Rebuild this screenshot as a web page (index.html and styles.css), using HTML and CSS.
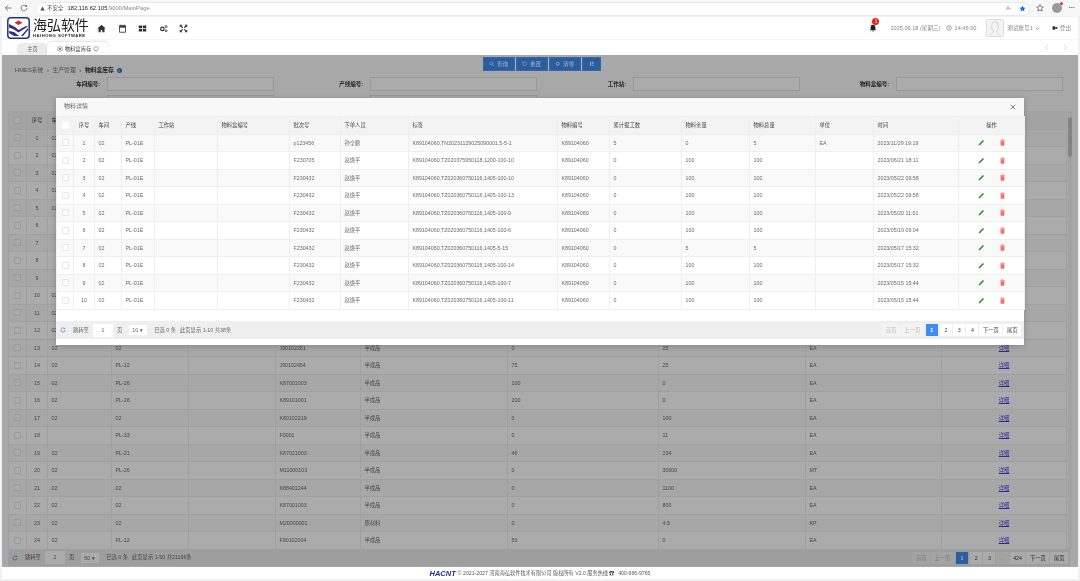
FILE: index.html
```html
<!DOCTYPE html>
<html lang="zh-CN">
<head>
<meta charset="utf-8">
<title>物料盒库存</title>
<link rel="stylesheet" href="styles.css">
</head>
<body>
<svg class="sprite" aria-hidden="true">
  <defs>
    <symbol id="pencil" viewBox="0 0 12 12"><path d="M1 11l.6-2.6L8.4 1.6l2 2-6.8 6.8z" fill="#2e8b2e"/></symbol>
    <symbol id="trash" viewBox="0 0 12 12"><path d="M4.5 1h3l.5 1h2.5v1.2h-9V2H4zM2.5 4h7l-.5 7.5H3z" fill="#f56c6c"/></symbol>
    <symbol id="refresh" viewBox="0 0 12 12"><path d="M10 6a4 4 0 1 1-1.3-3" fill="none" stroke="#3f87d8" stroke-width="1.4"/><path d="M10.4 1v3.2H7.2z" fill="#3f87d8"/></symbol>
  </defs>
</svg>

<div class="chrome">
  <svg class="chrome-ico" viewBox="0 0 12 12"><path d="M11 6H2M6 2L2 6l4 4" fill="none" stroke="#444" stroke-width="1"/></svg>
  <svg class="chrome-ico" viewBox="0 0 12 12"><path d="M10.2 6a4.2 4.2 0 1 1-1.3-3" fill="none" stroke="#444" stroke-width="1"/><path d="M10.4 1v3H7.4z" fill="#444"/></svg>
  <div class="address">
    <svg class="warn" viewBox="0 0 10 10"><path d="M5 1l4.5 8h-9z" fill="#555"/></svg>
    <span class="insecure">不安全</span>
    <span class="url">182.116.62.105<span class="url-dim">:9000/MainPage</span></span>
    <span class="addr-fill"></span>
    <span class="read">A<small>ᐞ</small></span>
    <svg class="addr-star" viewBox="0 0 12 12"><path d="M6 .8l1.6 3.4 3.7.5-2.7 2.6.7 3.7L6 9.2l-3.3 1.8.7-3.7L.7 4.7l3.7-.5z" fill="#1a6fd4"/></svg>
  </div>
  <svg class="fav" viewBox="0 0 12 12"><path d="M6 1l1.5 3.2 3.5.5-2.5 2.4.6 3.4L6 8.9l-3.1 1.6.6-3.4L1 4.7l3.5-.5z" fill="none" stroke="#444" stroke-width="1"/></svg>
  <span class="profile"><i></i></span>
  <span class="more">···</span>
</div>

<div class="app">
  <header class="topbar">
    <div class="brand">
      <svg class="logo" viewBox="0 0 23 22">
        <rect x=".8" y=".8" width="21.4" height="20.4" rx="3" fill="#fff" stroke="#2b2f86" stroke-width="1.5"/>
        <path d="M11.5 3.5l4 2.3-4 2.2-4-2.2z" fill="#e3242b"/>
        <path d="M2 7l6 3 3.5 3L19 9l2 .5-9.5 6L6 12l-4-1.5z" fill="#2b2f86"/>
        <path d="M2 14l5 1 5 4h-5L2 16zM21 13l-5 6h-2l7-8z" fill="#2b2f86"/>
      </svg>
      <div class="brand-text">
        <div class="brand-cn">海弘软件</div>
        <div class="brand-en">HAIHONG SOFTWARE</div>
      </div>
    </div>
    <nav class="topnav">
      <svg viewBox="0 0 12 12"><path d="M6 1L.5 6H2v5h3V8h2v3h3V6h1.500z" fill="#333"/></svg>
      <svg viewBox="0 0 12 12"><path d="M2 2h8v9H2z" fill="none" stroke="#444" stroke-width="1.200"/><path d="M2 2h8v3H2zM3.500 .8h1v2h-1zM7.500 .8h1v2h-1z" fill="#444"/></svg>
      <svg viewBox="0 0 12 12"><path d="M1 2h4.500v3.500H1zM6.500 2H11v3.500H6.500zM1 6.500h4.500V10H1zM6.500 6.500H11V10H6.500z" fill="#333"/></svg>
      <svg viewBox="0 0 12 12"><circle cx="4.500" cy="6.500" r="2.300" fill="none" stroke="#333" stroke-width="1.600"/><circle cx="9.500" cy="3.500" r="1.300" fill="none" stroke="#333" stroke-width="1.100"/><circle cx="9.500" cy="9" r="1.300" fill="none" stroke="#333" stroke-width="1.100"/></svg>
      <svg viewBox="0 0 12 12"><path d="M1 1h3.500L3.300 2.200 5.500 4.400 4.400 5.500 2.200 3.300 1 4.500zM11 1v3.500L9.800 3.300 7.600 5.500 6.500 4.400l2.200-2.200L7.500 1zM1 11V7.500l1.200 1.200 2.200-2.200 1.100 1.100-2.200 2.200L4.500 11zM11 11H7.500l1.200-1.200-2.200-2.200 1.100-1.100 2.200 2.200L11 7.500z" fill="#333"/></svg>
    </nav>
    <div class="status">
      <div class="bell">
        <svg viewBox="0 0 12 12"><path d="M6 1a3.500 3.500 0 0 1 3.500 3.500V8l1.200 1.500H1.300L2.500 8V4.500A3.500 3.500 0 0 1 6 1zM4.800 10.300h2.400A1.200 1.200 0 0 1 4.800 10.300z" fill="#222"/></svg>
        <span class="badge">1</span>
      </div>
      <span class="date">2025.06.18 (星期三)</span>
      <svg class="clock" viewBox="0 0 12 12"><circle cx="6" cy="6" r="4.700" fill="none" stroke="#666" stroke-width="1.100"/><path d="M6 3v3.300h2.500" fill="none" stroke="#666"/></svg>
      <span class="time">14:45:30</span>
      <div class="avatar"><svg viewBox="0 0 18 18"><path d="M4 17c1-2 3-2.500 3.200-4C5.500 11 5 8.500 5.200 6.500 5.500 3.500 7 2 9 2s3.500 1.500 3.800 4.500c.2 2-.3 4.500-2 6.500.2 1.500 2.200 2 3.200 4" fill="none" stroke="#ccc" stroke-width="1"/></svg></div>
      <span class="user">测试账号1</span>
      <svg class="caret" viewBox="0 0 8 8"><path d="M1 2.500l3 3 3-3" fill="none" stroke="#666"/></svg>
      <svg class="exit" viewBox="0 0 12 12"><path d="M1 2.500h5v7H1z" fill="#333"/><path d="M6 4.500h3V3l2.500 3L9 9V7.500H6z" fill="#333"/></svg>
      <span class="logout">登出</span>
    </div>
  </header>

  <div class="tabs">
    <div class="tab">主页</div>
    <div class="tab tab-active">
      <svg viewBox="0 0 10 10"><circle cx="5" cy="5" r="4" fill="none" stroke="#555" stroke-width=".8"/><circle cx="5" cy="5" r="1.600" fill="#555"/></svg>
      物料盒库存
      <svg viewBox="0 0 10 10"><circle cx="5" cy="4.500" r="3.500" fill="none" stroke="#555" stroke-width=".8"/><path d="M4 8l2 1" stroke="#555" stroke-width=".8"/></svg>
    </div>
    <div class="tab-arrows">
      <svg viewBox="0 0 8 10"><path d="M6 1L2 5l4 4" fill="none" stroke="#c9c9c9" stroke-width="1.200"/></svg>
      <svg viewBox="0 0 8 10"><path d="M2 1l4 4-4 4" fill="none" stroke="#c9c9c9" stroke-width="1.200"/></svg>
    </div>
  </div>

  <main class="content">
    <div class="toolbar">
      <div class="crumbs">HMES系统 <span class="sep">›</span> 生产管理 <span class="sep">›</span> <b>物料盒库存</b> <i class="info">i</i></div>
      <div class="actions">
        <button class="btn"><svg viewBox="0 0 10 10"><circle cx="4.300" cy="4.300" r="2.800" fill="none" stroke="#fff" stroke-width="1.100"/><path d="M6.500 6.500L9 9" stroke="#fff" stroke-width="1.200"/></svg>查询</button>
        <button class="btn"><svg viewBox="0 0 10 10"><path d="M2 3a3.500 3.500 0 1 1-.5 2.500" fill="none" stroke="#fff" stroke-width="1.100"/><path d="M1 1v3h3z" fill="#fff"/></svg>重置</button>
        <button class="btn"><svg viewBox="0 0 10 10"><circle cx="5" cy="5" r="2.800" fill="none" stroke="#fff" stroke-width="1.500"/></svg>清零</button>
        <button class="btn btn-icon"><svg viewBox="0 0 10 10"><path d="M2 1h2v8H2zM6 1h2v4.500H6zM6 7h2v2H6z" fill="#fff"/></svg></button>
      </div>
    </div>

    <form class="filters">
      <label class="field"><span>车间编号:</span><i class="input"></i></label>
      <label class="field"><span>产线编号:</span><i class="input"></i></label>
      <label class="field"><span>工作站:</span><i class="input"></i></label>
      <label class="field"><span>物料盒编号:</span><i class="input"></i></label>
      <label class="field"><span>类型:</span><i class="input"></i></label>
      <label class="field"><span>物料编号:</span><i class="input"></i></label>
    </form>

    <div class="grid-wrap">
      <div class="grid-scroll">
        <table class="table table-main">
          <colgroup><col class="m1"><col class="m2"><col class="m3"><col class="m4"><col class="m5"><col class="m6"><col class="m7"><col class="m8"><col class="m9"><col class="m10"><col class="m11"></colgroup>
          <thead><tr><th><i class="check"></i></th><th class="center">序号</th><th>车间</th><th>产线</th><th>工作站</th><th>物料编号</th><th>类型</th><th>数量</th><th>余量</th><th>单位</th><th class="center">操作</th></tr></thead>
          <tbody>
            <tr><td><i class="check"></i></td><td class="center">1</td><td>02</td><td>02</td><td></td><td>K80102219</td><td>半成品</td><td>0</td><td>100</td><td>EA</td><td class="center"><a>详细</a></td></tr>
            <tr><td><i class="check"></i></td><td class="center">2</td><td>02</td><td>02</td><td></td><td>K80102219</td><td>半成品</td><td>0</td><td>100</td><td>EA</td><td class="center"><a>详细</a></td></tr>
            <tr><td><i class="check"></i></td><td class="center">3</td><td>02</td><td>02</td><td></td><td>K80102219</td><td>半成品</td><td>0</td><td>100</td><td>EA</td><td class="center"><a>详细</a></td></tr>
            <tr><td><i class="check"></i></td><td class="center">4</td><td>02</td><td>02</td><td></td><td>K80102219</td><td>半成品</td><td>0</td><td>100</td><td>EA</td><td class="center"><a>详细</a></td></tr>
            <tr><td><i class="check"></i></td><td class="center">5</td><td>02</td><td>02</td><td></td><td>K80102219</td><td>半成品</td><td>0</td><td>100</td><td>EA</td><td class="center"><a>详细</a></td></tr>
            <tr><td><i class="check"></i></td><td class="center">6</td><td></td><td>02</td><td></td><td>K80102219</td><td>半成品</td><td>0</td><td>100</td><td>EA</td><td class="center"><a>详细</a></td></tr>
            <tr><td><i class="check"></i></td><td class="center">7</td><td></td><td>02</td><td></td><td>K80102219</td><td>半成品</td><td>0</td><td>100</td><td>EA</td><td class="center"><a>详细</a></td></tr>
            <tr><td><i class="check"></i></td><td class="center">8</td><td></td><td>02</td><td></td><td>K80102219</td><td>半成品</td><td>0</td><td>100</td><td>EA</td><td class="center"><a>详细</a></td></tr>
            <tr><td><i class="check"></i></td><td class="center">9</td><td></td><td>02</td><td></td><td>K80102219</td><td>半成品</td><td>0</td><td>100</td><td>EA</td><td class="center"><a>详细</a></td></tr>
            <tr><td><i class="check"></i></td><td class="center">10</td><td>02</td><td>02</td><td></td><td>K80102219</td><td>半成品</td><td>0</td><td>100</td><td>EA</td><td class="center"><a>详细</a></td></tr>
            <tr><td><i class="check"></i></td><td class="center">11</td><td>02</td><td>02</td><td></td><td>K80102219</td><td>半成品</td><td>0</td><td>100</td><td>EA</td><td class="center"><a>详细</a></td></tr>
            <tr><td><i class="check"></i></td><td class="center">12</td><td>02</td><td>02</td><td></td><td>K80102219</td><td>半成品</td><td>0</td><td>100</td><td>EA</td><td class="center"><a>详细</a></td></tr>
            <tr><td><i class="check"></i></td><td class="center">13</td><td>02</td><td>02</td><td></td><td>J90102261</td><td>半成品</td><td>0</td><td>25</td><td>EA</td><td class="center"><a>详细</a></td></tr>
            <tr><td><i class="check"></i></td><td class="center">14</td><td>02</td><td>PL-12</td><td></td><td>J90102454</td><td>半成品</td><td>75</td><td>25</td><td>EA</td><td class="center"><a>详细</a></td></tr>
            <tr><td><i class="check"></i></td><td class="center">15</td><td>02</td><td>PL-26</td><td></td><td>K87001003</td><td>半成品</td><td>100</td><td>0</td><td>EA</td><td class="center"><a>详细</a></td></tr>
            <tr><td><i class="check"></i></td><td class="center">16</td><td>02</td><td>PL-26</td><td></td><td>K89101001</td><td>半成品</td><td>200</td><td>0</td><td>EA</td><td class="center"><a>详细</a></td></tr>
            <tr><td><i class="check"></i></td><td class="center">17</td><td>02</td><td>02</td><td></td><td>K80102219</td><td>半成品</td><td>0</td><td>100</td><td>EA</td><td class="center"><a>详细</a></td></tr>
            <tr><td><i class="check"></i></td><td class="center">18</td><td></td><td>PL-33</td><td></td><td>F0001</td><td>半成品</td><td>0</td><td>11</td><td>EA</td><td class="center"><a>详细</a></td></tr>
            <tr><td><i class="check"></i></td><td class="center">19</td><td>02</td><td>PL-21</td><td></td><td>K87021003</td><td>半成品</td><td>46</td><td>234</td><td>EA</td><td class="center"><a>详细</a></td></tr>
            <tr><td><i class="check"></i></td><td class="center">20</td><td>02</td><td>PL-26</td><td></td><td>M11000103</td><td>半成品</td><td>0</td><td>30000</td><td>MT</td><td class="center"><a>详细</a></td></tr>
            <tr><td><i class="check"></i></td><td class="center">21</td><td>02</td><td>02</td><td></td><td>K88401244</td><td>半成品</td><td>0</td><td>1100</td><td>EA</td><td class="center"><a>详细</a></td></tr>
            <tr><td><i class="check"></i></td><td class="center">22</td><td>02</td><td>02</td><td></td><td>K87001003</td><td>半成品</td><td>0</td><td>800</td><td>EA</td><td class="center"><a>详细</a></td></tr>
            <tr><td><i class="check"></i></td><td class="center">23</td><td>02</td><td>02</td><td></td><td>M20000001</td><td>原材料</td><td>0</td><td>4.5</td><td>KP</td><td class="center"><a>详细</a></td></tr>
            <tr><td><i class="check"></i></td><td class="center">24</td><td>02</td><td>PL-12</td><td></td><td>F90102004</td><td>半成品</td><td>50</td><td>0</td><td>EA</td><td class="center"><a>详细</a></td></tr>
          </tbody>
        </table>
        <div class="scrollbar"><i></i></div>
      </div>
      <div class="pager pager-main">
        <svg class="pager-refresh"><use href="#refresh"/></svg>
        <span>跳转至</span><i class="page-input">1</i><span>页</span>
        <i class="page-size">50 <b>▾</b></i>
        <span>已选 0 条</span><span>此页显示 1-50 共21196条</span>
        <div class="pages">
          <a class="off">首页</a><a class="off">上一页</a><a class="on">1</a><a>2</a><a>3</a><a class="off">...</a><a>424</a><a>下一页</a><a>尾页</a>
        </div>
      </div>
    </div>

    <div class="overlay"></div>

    <section class="modal">
      <div class="modal-title"><span>物料详情</span><svg viewBox="0 0 8 8"><path d="M1 1l6 6M7 1L1 7" stroke="#444" stroke-width=".9"/></svg></div>
      <div class="modal-body">
        <table class="table table-detail">
          <colgroup><col class="d1"><col class="d2"><col class="d3"><col class="d4"><col class="d5"><col class="d6"><col class="d7"><col class="d8"><col class="d9"><col class="d10"><col class="d11"><col class="d12"><col class="d13"><col class="d14"><col class="d15"><col class="d16"></colgroup>
          <thead><tr><th><i class="check"></i></th><th class="center">序号</th><th>车间</th><th>产线</th><th>工作站</th><th>物料盒编号</th><th>批次号</th><th>下单人员</th><th>标签</th><th>物料编号</th><th>累计报工数</th><th>物料余量</th><th>物料总量</th><th>单位</th><th>时间</th><th class="center">操作</th></tr></thead>
          <tbody>
            <tr><td><i class="check"></i></td><td class="center">1</td><td>02</td><td>PL-01E</td><td></td><td></td><td>p123456</td><td>孙全鹏</td><td>K89104060,TN20231129025090001,5-5-1</td><td>K89104060</td><td>5</td><td>0</td><td>5</td><td>EA</td><td>2023/11/29 19:19</td><td class="ops"><svg><use href="#pencil"/></svg><svg><use href="#trash"/></svg></td></tr>
            <tr><td><i class="check"></i></td><td class="center">2</td><td>02</td><td>PL-01E</td><td></td><td></td><td>F230705</td><td>赵焕平</td><td>K89104060,TZ020375950118,1200-100-10</td><td>K89104060</td><td>0</td><td>100</td><td>100</td><td></td><td>2023/06/21 18:11</td><td class="ops"><svg><use href="#pencil"/></svg><svg><use href="#trash"/></svg></td></tr>
            <tr><td><i class="check"></i></td><td class="center">3</td><td>02</td><td>PL-01E</td><td></td><td></td><td>F230432</td><td>赵焕平</td><td>K89104060,TZ020360750116,1405-100-10</td><td>K89104060</td><td>0</td><td>100</td><td>100</td><td></td><td>2023/05/22 09:58</td><td class="ops"><svg><use href="#pencil"/></svg><svg><use href="#trash"/></svg></td></tr>
            <tr><td><i class="check"></i></td><td class="center">4</td><td>02</td><td>PL-01E</td><td></td><td></td><td>F230432</td><td>赵焕平</td><td>K89104060,TZ020360750116,1405-100-13</td><td>K89104060</td><td>0</td><td>100</td><td>100</td><td></td><td>2023/05/22 09:58</td><td class="ops"><svg><use href="#pencil"/></svg><svg><use href="#trash"/></svg></td></tr>
            <tr><td><i class="check"></i></td><td class="center">5</td><td>02</td><td>PL-01E</td><td></td><td></td><td>F230432</td><td>赵焕平</td><td>K89104060,TZ020360750116,1405-100-9</td><td>K89104060</td><td>0</td><td>100</td><td>100</td><td></td><td>2023/05/20 11:01</td><td class="ops"><svg><use href="#pencil"/></svg><svg><use href="#trash"/></svg></td></tr>
            <tr><td><i class="check"></i></td><td class="center">6</td><td>02</td><td>PL-01E</td><td></td><td></td><td>F230432</td><td>赵焕平</td><td>K89104060,TZ020360750116,1405-100-6</td><td>K89104060</td><td>0</td><td>100</td><td>100</td><td></td><td>2023/05/19 09:04</td><td class="ops"><svg><use href="#pencil"/></svg><svg><use href="#trash"/></svg></td></tr>
            <tr><td><i class="check"></i></td><td class="center">7</td><td>02</td><td>PL-01E</td><td></td><td></td><td>F230432</td><td>赵焕平</td><td>K89104060,TZ020360750116,1405-5-15</td><td>K89104060</td><td>0</td><td>5</td><td>5</td><td></td><td>2023/05/17 15:32</td><td class="ops"><svg><use href="#pencil"/></svg><svg><use href="#trash"/></svg></td></tr>
            <tr><td><i class="check"></i></td><td class="center">8</td><td>02</td><td>PL-01E</td><td></td><td></td><td>F230432</td><td>赵焕平</td><td>K89104060,TZ020360750116,1405-100-14</td><td>K89104060</td><td>0</td><td>100</td><td>100</td><td></td><td>2023/05/17 15:32</td><td class="ops"><svg><use href="#pencil"/></svg><svg><use href="#trash"/></svg></td></tr>
            <tr><td><i class="check"></i></td><td class="center">9</td><td>02</td><td>PL-01E</td><td></td><td></td><td>F230432</td><td>赵焕平</td><td>K89104060,TZ020360750116,1405-100-7</td><td>K89104060</td><td>0</td><td>100</td><td>100</td><td></td><td>2023/05/15 15:44</td><td class="ops"><svg><use href="#pencil"/></svg><svg><use href="#trash"/></svg></td></tr>
            <tr><td><i class="check"></i></td><td class="center">10</td><td>02</td><td>PL-01E</td><td></td><td></td><td>F230432</td><td>赵焕平</td><td>K89104060,TZ020360750116,1405-100-11</td><td>K89104060</td><td>0</td><td>100</td><td>100</td><td></td><td>2023/05/15 15:44</td><td class="ops"><svg><use href="#pencil"/></svg><svg><use href="#trash"/></svg></td></tr>
          </tbody>
        </table>
      </div>
      <div class="pager pager-detail">
        <svg class="pager-refresh"><use href="#refresh"/></svg>
        <span>跳转至</span><i class="page-input">1</i><span>页</span>
        <i class="page-size">10 <b>▾</b></i>
        <span>已选 0 条</span><span>此页显示 1-10 共38条</span>
        <div class="pages">
          <a class="off">首页</a><a class="off">上一页</a><a class="on">1</a><a>2</a><a>3</a><a>4</a><a>下一页</a><a>尾页</a>
        </div>
      </div>
    </section>
  </main>

  <footer class="footer"><b>HACNT</b><span>© 2021-2027 河南海弘软件技术有限公司 版权所有 V2.0 服务热线</span><i class="phone">☎</i><span>: 400-666-9765</span></footer>
</div>
</body>
</html>
```

FILE: styles.css
```css
* { box-sizing: border-box; }
html, body { margin: 0; height: 100%; }
html { background: #f1f1f1; }
body {
  width: 1080px; height: 581px; overflow: hidden;
  background: #f1f1f1; color: #555;
  font: 5.3px/1.2 "Liberation Sans", "Noto Sans CJK SC", sans-serif;
  display: flex; flex-direction: column;
  filter: blur(.3px);
}
i { font-style: normal; }
.sprite { width: 0; height: 0; position: absolute; }

/* browser chrome */
.chrome { height: 16px; flex: none; display: flex; align-items: center; padding: 0 5px 0 4px; background: #f7f7f7; }
.chrome-ico { width: 8px; height: 8px; margin-right: 8px; }
.address { width: 995px; height: 14px; margin-left: -1px; margin-top: 1px; background: #fff; border-radius: 7px; border: 1px solid #e8e8e8; display: flex; align-items: center; padding: 0 3px 0 4px; font-size: 5.5px; }
.warn { width: 5px; height: 5px; }
.insecure { margin-left: 2px; color: #444; }
.url { margin-left: 4px; color: #222; font-size: 5.8px; }
.url-dim { color: #888; }
.addr-fill { flex: 1; }
.read { color: #888; font-size: 6px; margin-right: 7px; }
.read small { font-size: 3px; }
.addr-star { width: 7px; height: 7px; }
.fav { width: 8px; height: 8px; margin-left: 6px; }
.profile { width: 10px; height: 10px; border-radius: 50%; background: #9a9a9a; margin-left: 8px; position: relative; }
.profile i { position: absolute; right: -1px; top: -1px; width: 3px; height: 3px; border-radius: 50%; background: #e0322c; }
.more { margin-left: 7px; color: #444; font-weight: bold; font-size: 6px; }

/* app */
.app { margin: 1px 2px 0 2px; height: 562px; flex: none; display: flex; flex-direction: column; background: #fff; border-radius: 3px 3px 0 0; overflow: hidden; }
.topbar { height: 22px; flex: none; display: flex; align-items: center; padding: 0 0 0 5px; }
.brand { display: flex; align-items: center; gap: 3px; width: 90px; }
.logo { width: 23px; height: 22px; flex: none; }
.brand-text { color: #222; }
.brand-cn { font-size: 14px; line-height: 15px; letter-spacing: -.05px; white-space: nowrap; }
.brand-en { font-size: 4.2px; line-height: 5px; font-weight: bold; letter-spacing: .5px; white-space: nowrap; }
.topnav { display: flex; gap: 11.5px; margin-left: 0; }
.topnav svg { width: 9px; height: 9px; }
.status { margin-left: auto; display: flex; align-items: center; color: #888; font-size: 5.6px; }
.bell { position: relative; width: 8px; height: 8px; }
.bell svg { width: 8px; height: 8px; display: block; }
.badge { position: absolute; left: 3px; top: -6px; width: 7px; height: 7px; border-radius: 50%; background: #e8201f; color: #fff; font-size: 4.5px; line-height: 7px; text-align: center; }
.date { margin-left: 13px; }
.clock { width: 6px; height: 6px; margin-left: 5px; }
.time { margin-left: 3px; }
.avatar { width: 18px; height: 18px; margin-left: 10px; border: 1px solid #ddd; border-radius: 2px; background: #f4f4f4; display: flex; }
.avatar svg { width: 100%; height: 100%; }
.user { margin-left: 3px; }
.caret { width: 5px; height: 5px; margin-left: 2px; }
.exit { width: 6px; height: 6px; margin-left: 12px; }
.logout { margin-left: 2px; margin-right: 7px; }

.tabs { height: 16px; flex: none; display: flex; align-items: flex-end; padding-left: 15px; border-top: 1px solid #f6f6f6; }
.tab { height: 12px; width: 31px; padding-top: 1px; display: flex; align-items: center; justify-content: center; gap: 2px; background: #ebebeb; color: #666; border-radius: 5px 5px 0 0; white-space: nowrap; }
.tab-active { width: 62px; height: 13px; background: #fff; color: #444; margin-left: -1px; box-shadow: 0 -1px 2px rgba(0,0,0,.12); }
.tab svg { width: 6px; height: 6px; flex: none; }
.tab-arrows { margin-left: auto; align-self: center; display: flex; gap: 14px; padding-right: 10px; }
.tab-arrows svg { width: 5px; height: 7px; display: block; }

.content { position: relative; height: 512px; flex: none; background: #fbfbfb; padding: 2px 6px 0 6px; display: flex; flex-direction: column; }
.toolbar { height: 20px; flex: none; display: flex; }
.crumbs { width: 475px; align-self: flex-end; padding: 0 0 3px 7px; font-size: 5.8px; color: #777; }
.crumbs b { color: #333; }
.sep { margin: 0 2px; color: #555; }
.info { display: inline-block; width: 5px; height: 5px; margin-left: 1px; line-height: 5px; border-radius: 50%; background: #2d76cc; color: #fff; text-align: center; font-size: 4px; font-weight: bold; }
.actions { display: flex; gap: 1.5px; align-items: flex-start; }
.btn { height: 14px; width: 31.5px; padding: 0; border: 1px solid #5a9ae8; background: #3c8df0; color: #fff; font: inherit; font-size: 5.6px; display: flex; align-items: center; justify-content: center; gap: 2px; }
.btn svg { width: 5.5px; height: 5.5px; }
.btn-icon { width: 18.5px; }

.filters { height: 34px; flex: none; display: grid; grid-template-columns: repeat(4, 263px); grid-auto-rows: 14px; row-gap: 4px; padding-left: 3px; }
.field { display: flex; align-items: center; font-weight: bold; color: #333; font-size: 5.5px; }
.field span { width: 96px; padding-right: 7px; text-align: right; }
.input { width: 167px; height: 14px; background: #fff; border: 1px solid #e4e4e4; }

.grid-wrap { flex: 1; min-height: 0; display: flex; flex-direction: column; }
.grid-scroll { height: 438px; flex: none; display: flex; overflow: hidden; }
.table { border-collapse: collapse; table-layout: fixed; color: #6a6a6a; }
.table-main { width: 1058px; flex: none; align-self: flex-start; background: #fff; }
.table th, .table td { padding: 0 0 0 3.5px; border: 1px solid #efefef; white-space: nowrap; overflow: hidden; font-weight: normal; text-align: left; }
.table th { background: #f3f3f3; color: #444; }
.table tbody tr:nth-child(odd) { background: #f9f9f9; }
.table th:first-child, .table td:first-child { padding: 0; text-align: center; }
.table .center { text-align: center; padding: 0; }
.table tr { height: 17.5px; }
.table a { color: #4b3fd8; text-decoration: underline; }
.check { display: inline-block; width: 7px; height: 7px; vertical-align: middle; background: #fff; border: 1px solid #e6e6e6; border-radius: 1px; }
.m1 { width: 18px; } .m2 { width: 21px; } .m3 { width: 64px; } .m4 { width: 77px; } .m5 { width: 87px; } .m6 { width: 85px; }
.m7 { width: 147px; } .m8 { width: 151px; } .m9 { width: 147px; } .m10 { width: 136px; } .m11 { width: 125px; }
.scrollbar { width: 4px; margin-left: 1px; background: #f2f2f2; padding-top: 6px; }
.scrollbar i { display: block; height: 40px; background: #c4c4c4; border-radius: 2px; }

.pager { height: 18px; flex: none; display: flex; align-items: center; gap: 4px; background: #ececec; color: #666; padding: 0 2px 0 4px; white-space: nowrap; }
.pager-main { width: 1062px; height: 17px; }
.pager-refresh { width: 6px; height: 6px; margin-right: 3px; }
.page-input { width: 20px; height: 13px; line-height: 13px; background: #fff; text-align: center; }
.page-size { width: 18px; height: 10px; line-height: 10px; background: #fff; margin-left: 3px; padding-left: 3px; margin-right: 3px; }
.page-size b { font-size: 5px; }
.pages { margin-left: auto; display: flex; gap: 1px; }
.pages a { height: 12px; line-height: 12px; min-width: 12.2px; padding: 0 3.5px; text-align: center; background: #fff; color: #444; }
.pages .off { background: #f3f3f3; color: #bbb; }
.pages .on { background: #3d8ef0; color: #fff; font-weight: bold; margin: 0 1px; }

.overlay { position: absolute; inset: 0; background: rgba(0,0,0,.33); }

.modal { position: absolute; left: 54px; top: 43px; width: 968px; height: 247px; background: #fff; display: flex; flex-direction: column; box-shadow: 0 1px 6px rgba(0,0,0,.2); }
.modal-title { height: 18px; flex: none; background: #f8f8f8; display: flex; align-items: center; justify-content: space-between; padding: 0 8px 0 8px; font-size: 6px; color: #666; }
.modal-title svg { width: 6px; height: 6px; }
.modal-body { height: 205px; flex: none; }
.table-detail { width: 968px; }
.d1 { width: 17px; } .d2 { width: 21px; } .d3 { width: 27px; } .d4 { width: 33px; } .d5 { width: 63px; } .d6 { width: 72px; } .d7 { width: 51px; } .d8 { width: 68px; }
.d9 { width: 149px; } .d10 { width: 52px; } .d11 { width: 72px; } .d12 { width: 68px; } .d13 { width: 66px; } .d14 { width: 58px; } .d15 { width: 85px; } .d16 { width: 66px; }
.table .ops { padding: 0; text-align: center; }
.ops svg { width: 7px; height: 7px; vertical-align: middle; margin: 0 7px; }
.pager-detail { background: #efefef; padding-right: 3px; }
.table-detail thead .check { border-color: #fff; }

.footer { height: 12px; flex: none; display: flex; align-items: center; justify-content: center; gap: 1px; background: #fff; color: #555; font-size: 5.2px; }
.footer b { font-style: italic; font-size: 7.5px; color: #1f2c8f; margin-right: 1px; }
.phone { color: #222; }
```
